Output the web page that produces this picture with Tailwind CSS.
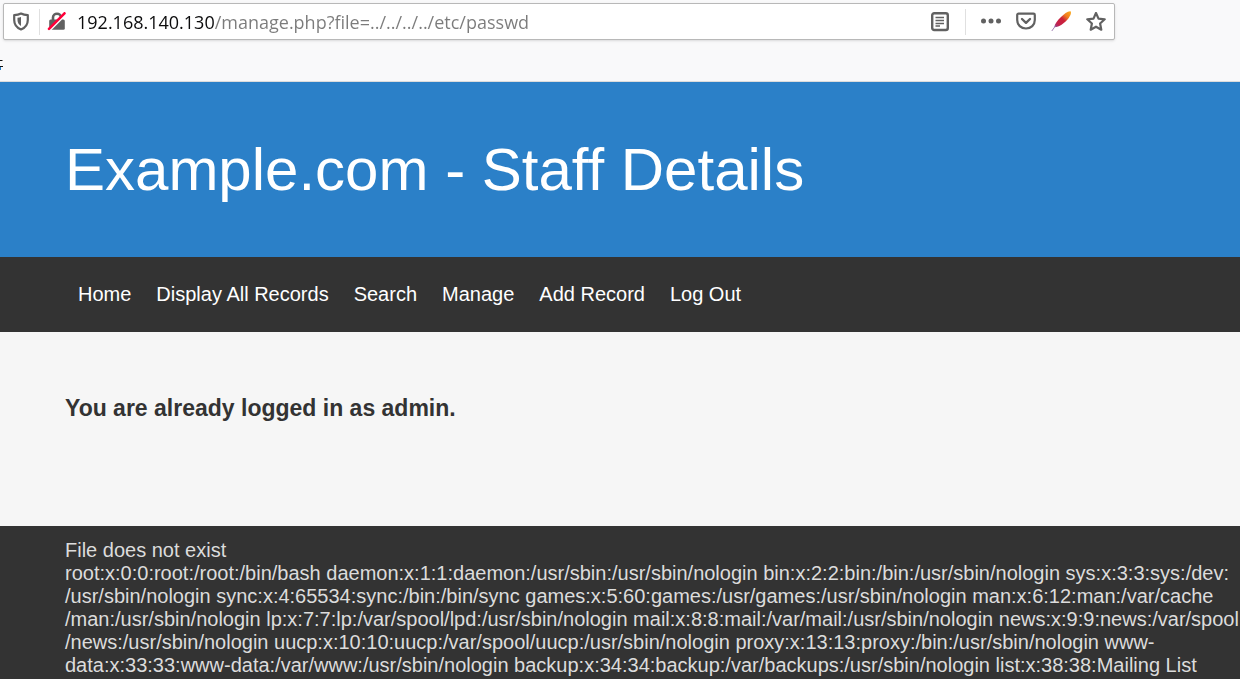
<!DOCTYPE html>
<html lang="en">
<head>
<meta charset="utf-8">
<meta name="viewport" content="width=device-width, initial-scale=1">
<title>Example.com - Staff Details</title>
<script src="https://cdn.jsdelivr.net/npm/@tailwindcss/browser@4"></script>
</head>
<body class="flex min-h-screen flex-col bg-[#f6f6f6] font-['Liberation_Sans',Arial,sans-serif] text-xl text-[#333]">
  <div class="flex flex-col border-b border-[#dcdcdc] bg-[#f9f9fa] pt-[3px] pr-[125px] pl-[3px]">
    <form class="flex h-[37px] items-center rounded-xs border border-[#b8b8b8] bg-white pr-2 pl-[7px] text-[#616161] shadow-sm">
      <button type="button" aria-label="Tracking protection" class="shrink-0">
        <svg class="size-5" viewBox="0 0 20 20" fill="none"><path d="M10 1.500C8 2.600 5.500 3.100 3.200 3.200V8C3.200 12.500 5.800 15.800 10 17.500C14.200 15.800 16.800 12.500 16.800 8V3.200C14.500 3.100 12 2.600 10 1.500Z" stroke="currentColor" stroke-width="2.200" stroke-linejoin="round"/><path d="M10 5V14C7.700 12.500 6.500 10.500 6.500 8V5.700C7.800 5.600 9 5.400 10 5Z" fill="currentColor"/></svg>
      </button>
      <span class="ml-[8px] h-[26px] w-px shrink-0 bg-[#e0e0e0]"></span>
      <button type="button" aria-label="Connection is not secure" class="ml-[7px] shrink-0">
        <svg class="size-5" viewBox="0 0 20 20" fill="none"><path d="M6 9V5.500C6 .5 14 .5 14 5.500V9" stroke="currentColor" stroke-width="2.600"/><rect x="2.200" y="7.500" width="15.600" height="10.300" rx="1.500" fill="currentColor"/><path d="M2.800 18.200L18.800 2.200" stroke="#fff" stroke-width="2.200"/><path d="M2 16.800L17.500 1.300" stroke="#ff0039" stroke-width="2.600" stroke-linecap="round"/></svg>
      </button>
      <input type="text" aria-label="Address" value="192.168.140.130/manage.php?file=../../../../etc/passwd" class="ml-[10px] h-7 min-w-0 flex-1 bg-[linear-gradient(90deg,#0c0c0d_137px,#7b7b7b_137px)] bg-clip-text font-['Open_Sans','Noto_Sans',sans-serif] text-[18px] text-transparent outline-none">
      <button type="button" aria-label="Reader view" class="shrink-0">
        <svg class="size-5" viewBox="0 0 20 20" fill="none" stroke="currentColor"><rect x="2.200" y="1.200" width="15.600" height="16.800" rx="2" stroke-width="2.400"/><path d="M5.500 5.500H14M5.500 8.500H14M5.500 11.500H14M5.500 14H10" stroke-width="1.300"/></svg>
      </button>
      <span class="ml-[15px] h-[26px] w-px shrink-0 bg-[#e0e0e0]"></span>
      <button type="button" aria-label="Page actions" class="ml-[15px] shrink-0">
        <svg class="size-5" viewBox="0 0 20 20" fill="currentColor"><circle cx="2.500" cy="9" r="2.500"/><circle cx="10" cy="9" r="2.500"/><circle cx="17.500" cy="9" r="2.500"/></svg>
      </button>
      <button type="button" aria-label="Save to Pocket" class="ml-[15px] shrink-0">
        <svg class="size-5" viewBox="0 0 20 20" fill="none" stroke="currentColor" stroke-linecap="round" stroke-linejoin="round"><path d="M2.500 1.700H17.500C18.200 1.700 18.800 2.200 18.800 3V8C18.800 13 15 16.500 10 16.500S1.200 13 1.200 8V3C1.200 2.200 1.800 1.700 2.500 1.700Z" stroke-width="2.200"/><path d="M6 7L10 10.800L14 7" stroke-width="2.400"/></svg>
      </button>
      <button type="button" aria-label="Apache feather" class="ml-[15px] shrink-0">
        <svg class="size-5" viewBox="0 0 20 20" fill="none" overflow="visible"><defs><linearGradient id="quill" x1="19" y1="0" x2="3" y2="16" gradientUnits="userSpaceOnUse"><stop stop-color="#f9a51a"/><stop offset=".25" stop-color="#f07a20"/><stop offset=".45" stop-color="#cb2138"/><stop offset=".75" stop-color="#c4204b"/><stop offset="1" stop-color="#7e4a9e"/></linearGradient></defs><path d="M19.500 -.8C20.800 1 19 4.500 16.500 7.500C13 11.500 8.500 14.800 3.300 15.200C3.500 12 6.500 8.500 10 5C13 2 16.500 -1 19.500 -.8Z" fill="url(#quill)"/><path d="M.8 19L4.500 13.800" stroke="#a382b5" stroke-width="1"/></svg>
      </button>
      <button type="button" aria-label="Bookmark this page" class="ml-[15px] shrink-0">
        <svg class="size-5" viewBox="0 0 20 20" fill="none"><path d="M10 1L12.500 6.600L18.700 7.300L14.100 11.500L15.300 17.700L10 14.700L4.700 17.700L5.900 11.500L1.300 7.300L7.500 6.600Z" stroke="currentColor" stroke-width="2.200" stroke-linejoin="round"/></svg>
      </button>
    </form>
    <div class="-ml-[3px] flex h-[41px] items-center pt-[6px]">
      <svg class="h-3 w-1" viewBox="0 0 4 12" fill="none"><path d="M0 2.500H2.500M0 8.500H3" stroke="#111" stroke-width="1"/><path d="M.5 9V12" stroke="#2b80c8" stroke-width="1"/></svg>
    </div>
  </div>
  <header class="bg-[#2b80c8] px-[65px] pt-[52px] pb-[51px] text-white">
    <h1 class="text-[60px] leading-[72px]">Example.com - Staff Details</h1>
  </header>
  <nav class="bg-[#333] px-[65px] py-[25px]">
    <ul class="flex flex-wrap text-xl leading-[25px] text-white">
      <li><a href="#" class="px-[13px]">Home</a></li>
      <li><a href="#" class="px-[12px]">Display All Records</a></li>
      <li><a href="#" class="px-[13px]">Search</a></li>
      <li><a href="#" class="px-[12px]">Manage</a></li>
      <li><a href="#" class="px-[13px]">Add Record</a></li>
      <li><a href="#" class="px-[12px]">Log Out</a></li>
    </ul>
  </nav>
  <main class="px-[65px] pt-[60px] pb-[102px]">
    <h2 class="text-[23px] leading-8 font-bold">You are already logged in as admin.</h2>
  </main>
  <footer class="flex-1 bg-[#333] pt-[13px] pl-[65px] leading-[23px] text-[#dcdcdc]">
    <p>File does not exist</p>
    <p>root:x:0:0:root:/root:/bin/bash daemon:x:1:1:daemon:/usr/sbin:/usr/sbin/nologin bin:x:2:2:bin:/bin:/usr/sbin/nologin sys:x:3:3:sys:/dev:<wbr>/usr/sbin/nologin sync:x:4:65534:sync:/bin:/bin/sync games:x:5:60:games:/usr/games:/usr/sbin/nologin man:x:6:12:man:/var/cache<wbr>/man:/usr/sbin/nologin lp:x:7:7:lp:/var/spool/lpd:/usr/sbin/nologin mail:x:8:8:mail:/var/mail:/usr/sbin/nologin news:x:9:9:news:/var/spool<wbr>/news:/usr/sbin/nologin uucp:x:10:10:uucp:/var/spool/uucp:/usr/sbin/nologin proxy:x:13:13:proxy:/bin:/usr/sbin/nologin www-data:x:33:33:www-data:/var/www:/usr/sbin/nologin backup:x:34:34:backup:/var/backups:/usr/sbin/nologin list:x:38:38:Mailing List</p>
  </footer>
</body>
</html>
